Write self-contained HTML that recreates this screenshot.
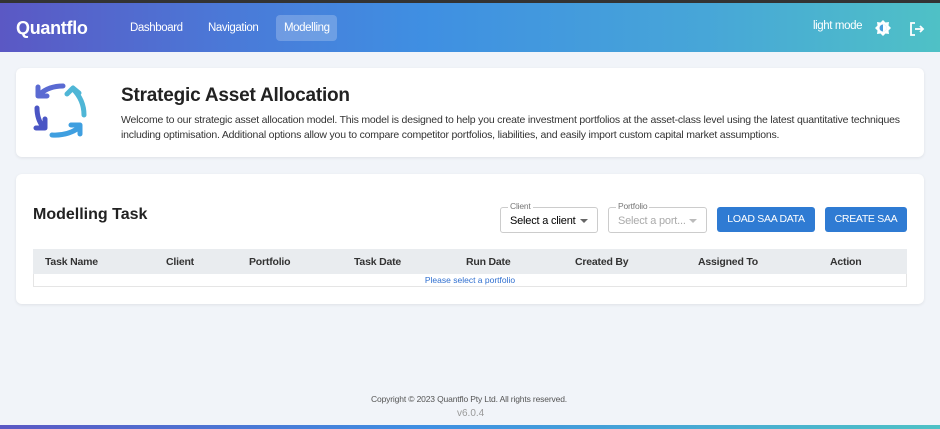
<!DOCTYPE html>
<html><head><meta charset="utf-8"><style>
*{margin:0;padding:0;box-sizing:border-box}
body{width:940px;height:429px;overflow:hidden;background:#f1f4f9;font-family:"Liberation Sans",sans-serif;position:relative}
.top{height:3px;background:#333}
.hdr{height:49px;background:linear-gradient(90deg,#5b58c4 0%,#4a7ad8 25%,#3f8fe2 45%,#47a6d8 75%,#4fc1c6 100%);position:relative;color:#fff}
.logo{position:absolute;left:16px;top:15px;font-size:18px;font-weight:bold;letter-spacing:-0.3px}
.nav{position:absolute;top:12px;font-size:11.5px;letter-spacing:-0.4px;padding:7px 8px;border-radius:4px}
.card{position:absolute;left:16px;width:908px;background:#fff;border-radius:6px;box-shadow:0 1px 3px rgba(0,0,0,.08)}
h1{position:absolute;left:105px;top:17px;font-size:19px;letter-spacing:-0.2px;color:#222}
.desc{position:absolute;left:105px;top:45px;width:780px;font-size:10.5px;letter-spacing:-0.2px;line-height:15px;color:#333}
.sel{position:absolute;top:33px;height:26px;border:1px solid #ccc;border-radius:3px;font-size:11px;letter-spacing:-0.2px;padding:7px 9px}
.sel label{position:absolute;top:-7px;left:7px;background:#fff;font-size:8.5px;color:#777;padding:0 2px}
.sel i{position:absolute;right:9px;top:11px;border:4px solid transparent;border-top:4px solid #666}
.btn{position:absolute;top:33px;height:25px;background:#2f7bd3;color:#fff;font-size:10.5px;letter-spacing:-0.3px;border-radius:3px;text-align:center;line-height:25px}
.th{position:absolute;top:75px;left:17px;width:874px;height:25px;background:#e9ecef;font-size:10.5px;letter-spacing:-0.2px;font-weight:bold;color:#333}
.th span{position:absolute;top:7px}
.row{position:absolute;top:100px;left:17px;width:874px;height:13px;border:1px solid #e5e5e5;border-top:none;font-size:8.5px;color:#2f6fd0;text-align:center;line-height:12px}
</style></head><body>
<div class="top"></div>
<div class="hdr">
<div class="logo">Quantflo</div>
<div class="nav" style="left:122px">Dashboard</div>
<div class="nav" style="left:200px">Navigation</div>
<div class="nav" style="left:276px;width:61px;background:rgba(255,255,255,.22)">Modelling</div>
<div style="position:absolute;left:813px;top:17px;font-size:11.5px;letter-spacing:-0.4px">light mode</div>
<svg style="position:absolute;left:875px;top:17px" width="16" height="16" viewBox="0 0 16 16"><polygon points="8,0 10.5,2.5 14,2 13.5,5.5 16,8 13.5,10.5 14,14 10.5,13.5 8,16 5.5,13.5 2,14 2.5,10.5 0,8 2.5,5.5 2,2 5.5,2.5" fill="#fff"/><circle cx="8" cy="8" r="3.5" fill="#4aa0dd"/><path d="M8 4.5a3.5 3.5 0 0 1 0 7z" fill="#fff"/></svg>
<svg style="position:absolute;left:909px;top:18px" width="16" height="16" viewBox="0 0 16 16" fill="none" stroke="#fff" stroke-width="1.8"><path d="M6 2H2v12h4M6 8h8M11 5l3 3-3 3"/></svg>
</div>
<div class="card" style="top:68px;height:89px">
<svg style="position:absolute;left:0;top:0" width="80" height="80" viewBox="0 0 80 80" fill="none" stroke-width="5" stroke-linecap="round" stroke-linejoin="round">
<path d="M47 18Q33 18 24 26M22 19v9h9" stroke="#5a6ad2"/>
<path d="M68 47Q68 32 57 21M51 26l6-6 6 5" stroke="#4fb6d6"/>
<path d="M21 40Q21 52 28 60M20 60h9v-9" stroke="#4a55c4"/>
<path d="M36 67Q52 68 64 59M55 57h9v9" stroke="#3f9fe0"/>
</svg>
<h1>Strategic Asset Allocation</h1>
<div class="desc">Welcome to our strategic asset allocation model. This model is designed to help you create investment portfolios at the asset-class level using the latest quantitative techniques including optimisation. Additional options allow you to compare competitor portfolios, liabilities, and easily import custom capital market assumptions.</div>
</div>
<div class="card" style="top:174px;height:130px">
<div style="position:absolute;left:17px;top:32px;font-size:16px;font-weight:bold;color:#222">Modelling Task</div>
<div class="sel" style="left:484px;width:98px"><label>Client</label>Select a client<i></i></div>
<div class="sel" style="left:592px;width:99px;color:#aaa"><label>Portfolio</label>Select a port...<i style="border-top-color:#bbb"></i></div>
<div class="btn" style="left:701px;width:98px">LOAD SAA DATA</div>
<div class="btn" style="left:809px;width:82px">CREATE SAA</div>
<div class="th"><span style="left:12px">Task Name</span><span style="left:133px">Client</span><span style="left:216px">Portfolio</span><span style="left:321px">Task Date</span><span style="left:433px">Run Date</span><span style="left:542px">Created By</span><span style="left:665px">Assigned To</span><span style="left:797px">Action</span></div>
<div class="row">Please select a portfolio</div>
</div>
<div style="position:absolute;top:394px;left:371px;font-size:8.5px;letter-spacing:-0.15px;color:#555">Copyright © 2023 Quantflo Pty Ltd. All rights reserved.</div>
<div style="position:absolute;top:408px;left:457px;font-size:10px;color:#999">v6.0.4</div>
<div style="position:absolute;bottom:0;left:0;width:940px;height:4px;background:linear-gradient(90deg,#5b58c4,#3f8fe2 45%,#4fc1c6)"></div>
</body></html>
